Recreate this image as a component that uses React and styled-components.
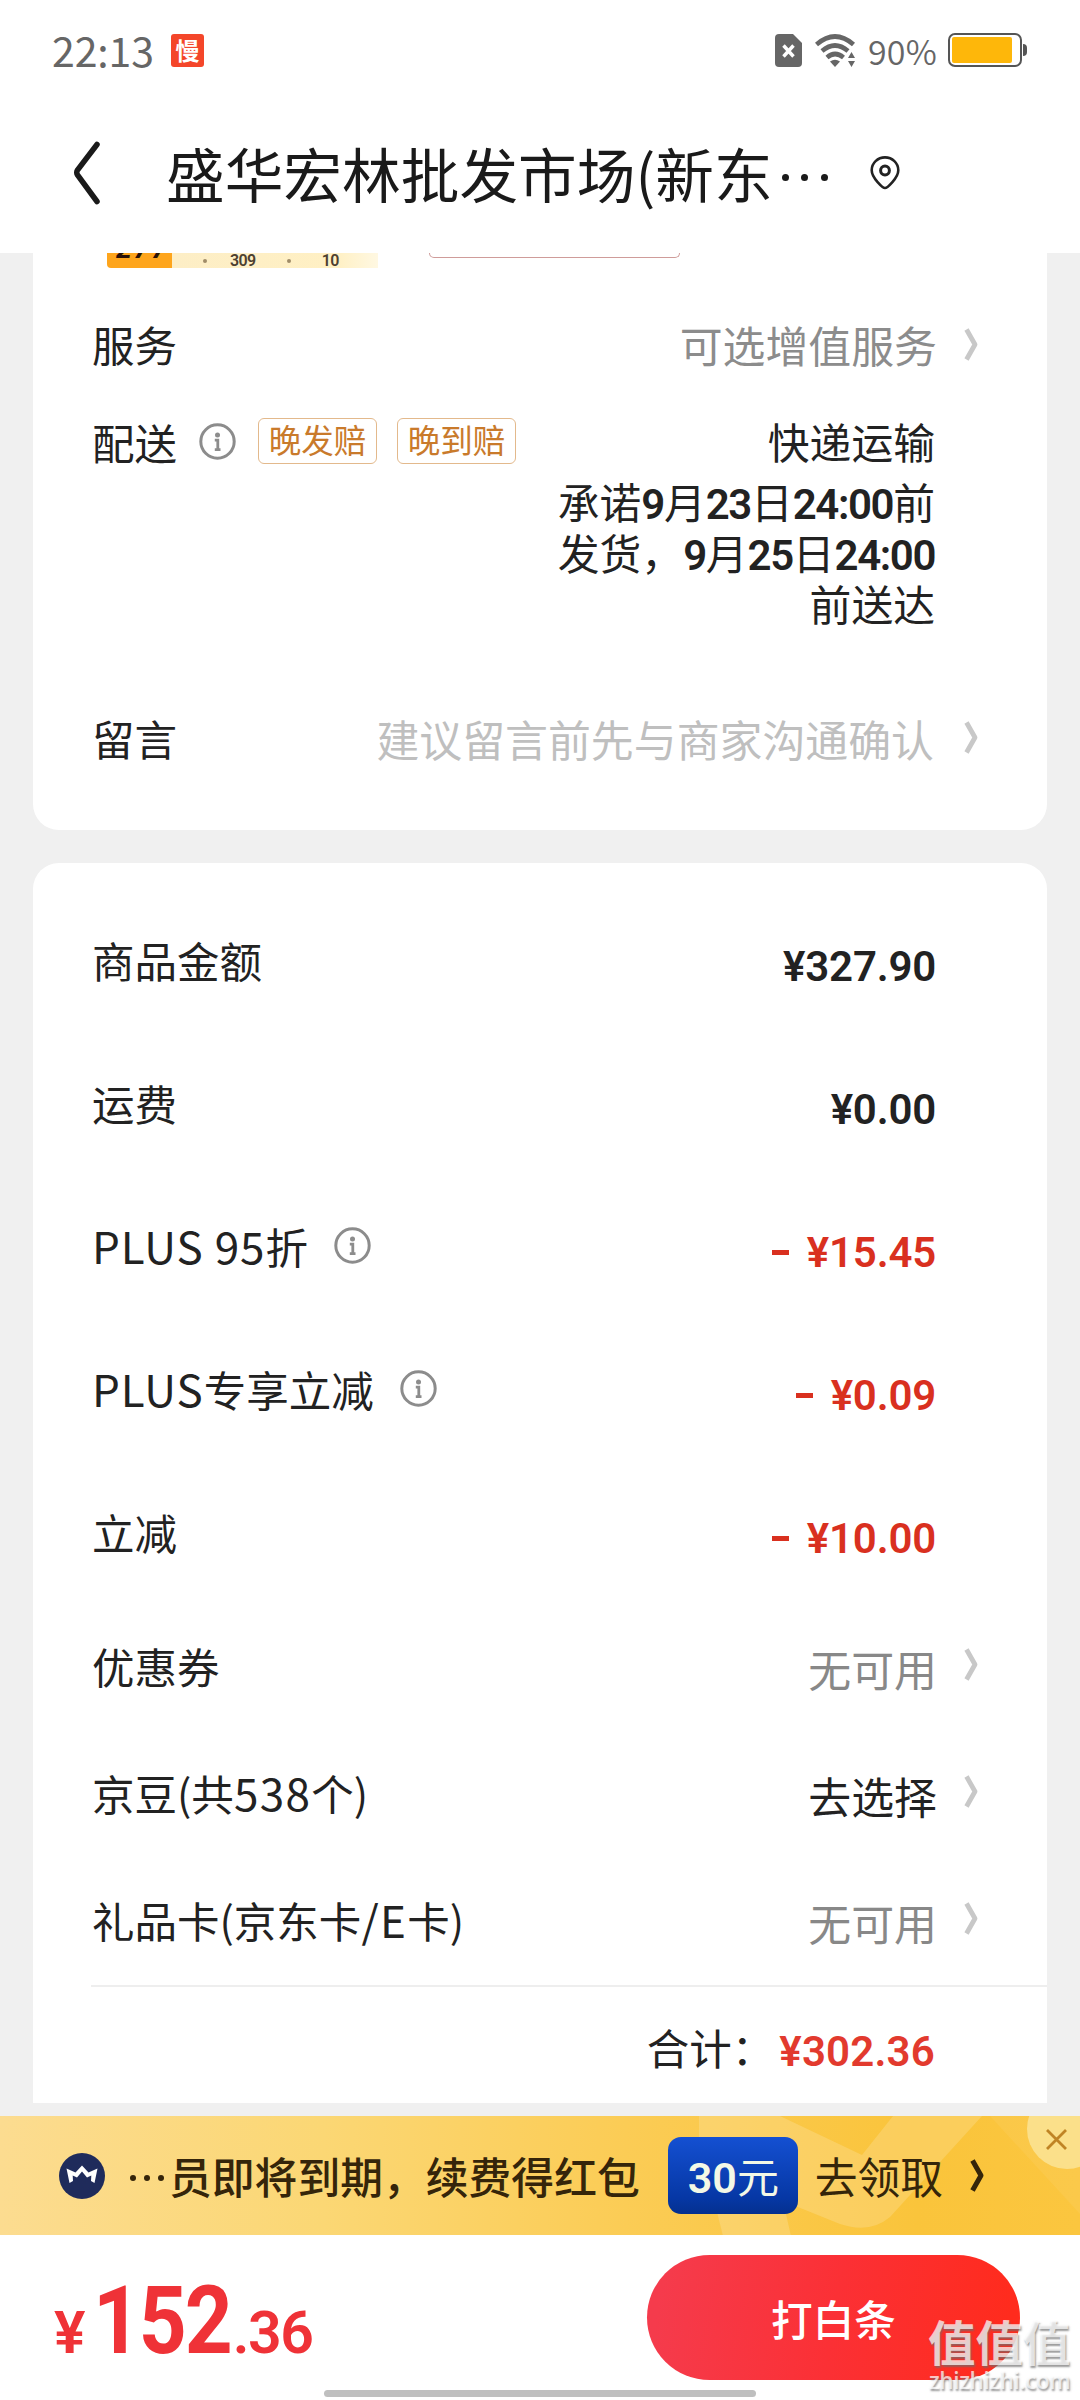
import React from 'react'
import styled, { createGlobalStyle } from 'styled-components'

const GlobalStyle = createGlobalStyle`
*{
  box-sizing: border-box;
  margin: 0;
  padding: 0;
}
body{
  background: #fff;
  font-family: 'Noto Sans CJK SC', sans-serif;
  color: #222;
}
svg{
  display: block;
  flex: none;
}
`

const Screen = styled.div`
width: 1080px;
height: 2400px;
display: flex;
flex-direction: column;
background: #f0f0f0;
overflow: hidden;
position: relative;
`

/* ---------- status bar ---------- */
const StatusBar = styled.div`
height: 100px;
background: #fff;
padding: 0 53px 0 52px;
display: flex;
align-items: center;
justify-content: space-between;
color: #666;
`

const StatusGroup = styled.div`
display: flex;
align-items: center;
`

const Clock = styled.span`
font-size: 41px;
line-height: 50px;
letter-spacing: -0.1px;
margin: -3px 17px 0 0;
`

const AppBadge = styled.span`
width: 33px;
height: 33px;
border-radius: 3px;
background: #f4462a;
color: #fff;
font-size: 24px;
font-weight: 700;
line-height: 31px;
text-align: center;
`

const BatteryText = styled.span`
font-size: 34px;
line-height: 40px;
font-weight: 350;
letter-spacing: 0.2px;
margin: 1px 11px 0 12px;
`

/* ---------- title bar ---------- */
const TitleBar = styled.header`
height: 153px;
background: #fff;
display: flex;
align-items: center;
padding: 0 0 7px 73px;
`

const Title = styled.h1`
font-size: 58.7px;
line-height: 70px;
font-weight: 400;
color: #1a1a1a;
margin: 0 0 0 65px;
white-space: nowrap;
`

const Dots = styled.span`
display: inline-flex;
align-items: center;
gap: ${props => props.gap};
height: ${props => props.size};
vertical-align: ${props => props.lift};
margin-left: ${props => props.left || 0};

i{
  width: ${props => props.size};
  height: ${props => props.size};
  border-radius: 50%;
  background: currentColor;
}
`

/* ---------- cards ---------- */
const Card = styled.section`
width: 1014px;
margin: 0 auto;
background: #fff;
border-radius: ${props => props.radius};
`

const ServiceCard = styled(Card)`
height: 577px;
margin-bottom: 33px;
`

const AmountCard = styled(Card)`
height: 1240px;
padding-top: 25px;
`

const ProductStrip = styled.div`
height: 16px;
padding-left: 74px;
display: flex;
overflow: hidden;
`

const PriceTag = styled.div`
width: 65px;
height: 15px;
background: #fea51c;
border-radius: 0 0 0 4px;
color: #2b1206;
font: italic 700 28px/28px Roboto, sans-serif;
letter-spacing: 2px;
padding-left: 9px;
overflow: hidden;

span{
  display: block;
  margin-top: -18px;
}
`

const PriceScale = styled.div`
width: 206px;
height: 15px;
background: linear-gradient(90deg, #fdeec6, #fff0c4 80%, #fff8e2);
display: flex;
align-items: center;
padding-left: 31px;
color: #4d4030;
font: 600 16px/15px Roboto, sans-serif;
letter-spacing: -0.6px;

i{
  width: 4px;
  height: 4px;
  border-radius: 50%;
  background: #a08c68;
}
b{
  font-weight: 600;
  margin: -1px 31px 0 23px;
}
b:last-child{
  margin: -1px 0 0 31px;
}
`

const SpecBox = styled.div`
width: 251px;
height: 5px;
margin-left: 51px;
border: 1.5px solid #cf9c9a;
border-top: 0;
border-radius: 0 0 5px 5px;
`

const Row = styled.div`
height: ${props => props.h}px;
padding: ${props => props.top || 0}px 69px 0 59px;
display: flex;
align-items: center;
justify-content: space-between;
`

const DeliveryRow = styled(Row)`
height: 221px;
align-items: flex-start;
`

const Label = styled.div`
display: flex;
align-items: center;
gap: ${props => props.gap || 22}px;
font-size: 42.5px;
line-height: 44px;
white-space: nowrap;
`

const Latin = styled.span`
font-size: 44px;
line-height: 0;
letter-spacing: ${props => props.spacing}px;
`

const Tags = styled.div`
display: flex;
gap: 20px;
margin-top: -1px;
`

const Tag = styled.span`
width: 119px;
height: 46px;
border: 1.5px solid #e3b98c;
border-radius: 6px;
color: #c97a2b;
font-size: 32.5px;
line-height: 39px;
text-align: center;
`

const Value = styled.div`
display: flex;
align-items: center;
gap: ${props => props.gap || 27}px;
font-size: 42.9px;
line-height: 44px;
color: ${props => props.color || '#222'};
white-space: nowrap;
`

const AssetRow = styled(Row)`
${Label}{
  margin-top: -3px;
}
${Value}{
  margin-top: 1px;
}
svg{
  margin-top: -7px;
}
`

const Promise = styled.div`
margin-right: 43px;
text-align: right;
font-size: 41.8px;
line-height: 44px;

p{
  height: 50.8px;
  line-height: 50.8px;
}
p:nth-child(2){
  margin-top: 13px;
}
`

const Num = styled.span`
font-family: Roboto, sans-serif;
font-weight: 600;
font-size: 42px;
line-height: 0;
letter-spacing: -1.4px;
`

const Amount = styled.div`
margin: 15px 42px 0 0;
font: 600 42px/44px Roboto, sans-serif;
color: ${props => props.red || '#222'};
letter-spacing: -0.2px;
display: flex;
gap: 18px;
`

const Minus = styled.i`
width: 17px;
height: 5px;
margin-top: 19px;
background: currentColor;
`

const TotalRow = styled(Row)`
height: 118px;
margin-left: 58px;
padding: 4px 112px 0 0;
border-top: 2px solid #eeeeee;
justify-content: flex-end;
gap: 5px;

${Amount}{
  margin: 10px 0 0;
  letter-spacing: 0.2px;
}
`

/* ---------- member banner ---------- */
const Banner = styled.div`
height: 119px;
margin-top: 13px;
flex: none;
position: relative;
overflow: hidden;
display: flex;
align-items: center;
padding-left: 59px;
background: linear-gradient(90deg, #fcdc90 0%, #fbd774 30%, #fbcc55 58%, #fac43b 85%, #fbc63f 100%);
color: #35250a;
`

const BannerArt = styled.svg`
position: absolute;
left: 0;
top: 0;
`

const BannerText = styled.div`
position: relative;
margin: 0 0 1px 24px;
font-size: 42.8px;
line-height: 50px;
font-weight: 500;
white-space: nowrap;

span + span{
  margin-left: 5px;
}
`

const Chip = styled.div`
position: relative;
width: 130px;
height: 77px;
margin-left: 28px;
border-radius: 13px;
background: linear-gradient(180deg, #1450d2, #0637a4 80%, #04308f);
color: #f3f8e6;
font-size: 42px;
line-height: 75px;
padding-left: 20px;
white-space: nowrap;

${Num}{
  font-size: 43px;
  letter-spacing: 0;
}
`

const Claim = styled.div`
position: relative;
display: flex;
align-items: center;
gap: 27px;
margin-left: 17px;
font-size: 42.8px;
line-height: 50px;

span{
  margin-bottom: 1px;
}
`

const CloseButton = styled.button`
position: absolute;
right: -27px;
top: -27px;
width: 80px;
height: 80px;
border: 0;
border-radius: 50%;
background: #fbe08a;
display: flex;
align-items: flex-start;
padding: 40px 0 0 19px;
`

/* ---------- pay bar ---------- */
const PayBar = styled.footer`
flex: 1;
background: #fff;
display: flex;
justify-content: space-between;
align-items: flex-start;
padding: 20px 60px 0 54px;
`

const Price = styled.div`
color: #ef3237;
font: 600 59px/94px Roboto, sans-serif;
margin-top: 19px;
letter-spacing: -1.4px;
white-space: nowrap;
display: flex;
align-items: baseline;

b{
  font-size: 94px;
  font-weight: 700;
  letter-spacing: -2.4px;
  margin: 0 -15px 0 9px;
  transform: scaleX(0.89);
  transform-origin: left;
}
`

const PayButton = styled.button`
width: 373px;
height: 125px;
border: 0;
border-radius: 63px;
background: linear-gradient(100deg, #f53b4c 5%, #fb3035 50%, #ff2b1d 95%);
color: #fff;
font: 500 41.6px/60px 'Noto Sans CJK SC', sans-serif;
`

const HomeIndicator = styled.div`
position: absolute;
left: 324px;
top: 2390px;
width: 432px;
height: 7px;
border-radius: 4px;
background: #bfbfbf;
`

const Watermark = styled.div`
position: absolute;
left: 928px;
top: 2313px;
width: 146px;
color: rgba(255, 255, 255, 0.72);
text-shadow: 1px 2px 2px rgba(110, 110, 110, 0.7);
white-space: nowrap;

strong{
  display: block;
  font-size: 47.5px;
  line-height: 56px;
  font-weight: 700;
}
span{
  display: block;
  font: 600 22.5px/24px 'Open Sans', sans-serif;
  letter-spacing: -0.4px;
  padding-left: 1px;
}
`

const Chevron = ({ color = '#c8c8c8', width = 4.8 }) => (
  <svg width="14" height="33" viewBox="0 0 14 33" fill="none" stroke={color} strokeWidth={width}>
    <path d="M2.5 1.5 L11 16.5 L2.5 31.5" strokeLinejoin="round" />
  </svg>
)

const InfoIcon = () => (
  <svg width="37" height="37" viewBox="0 0 37 37" fill="none" stroke="#8c8c8c" strokeWidth="3">
    <circle cx="18.5" cy="18.5" r="16.7" />
    <circle cx="18.5" cy="11.9" r="2.5" fill="#8c8c8c" stroke="none" />
    <path d="M15.8 17.2 H18.8 V26 M15.8 26.6 H21.5" strokeWidth="2.8" />
  </svg>
)

const SimIcon = () => (
  <svg width="27" height="33" viewBox="0 0 27 33">
    <path d="M4 0 H18 L27 9 V29 Q27 33 23 33 H4 Q0 33 0 29 V4 Q0 0 4 0Z" fill="#666" />
    <path d="M8.5 11.5 L18.5 22.5 M18.5 11.5 L8.5 22.5" stroke="#fff" strokeWidth="3.4" />
  </svg>
)

const WifiIcon = () => (
  <svg width="41" height="33" viewBox="0 0 41 33" fill="none" stroke="#666" strokeWidth="4.6">
    <path d="M1.5 10.5 Q20 -5.5 38.5 10.5" />
    <path d="M7 17 Q20 6 33 17" />
    <path d="M12 23.5 Q20 16.5 28.5 23.5" />
    <path d="M15 27.5 Q20 24 25 27.5 L20 33Z" fill="#666" stroke="none" />
    <path d="M33 24 L36.5 18 L40 24Z M33 27 L36.5 33 L40 27Z" fill="#666" stroke="none" />
  </svg>
)

const BatteryIcon = () => (
  <svg width="79" height="34" viewBox="0 0 79 34">
    <rect x="1" y="1" width="72" height="32" rx="6" fill="#fff" stroke="#555" strokeWidth="2" />
    <rect x="4" y="4" width="60" height="26" rx="2" fill="#feb70a" />
    <path d="M75 11 Q79 11 79 15 V19 Q79 23 75 23Z" fill="#555" />
  </svg>
)

const BackIcon = () => (
  <svg width="28" height="64" viewBox="0 0 28 64" fill="none" stroke="#1a1a1a" strokeWidth="5.5">
    <path d="M24 3.5 L4.5 29 Q3 31.5 4.5 34 L24 60.5" strokeLinecap="round" />
  </svg>
)

const PinIcon = () => (
  <svg width="30" height="34" viewBox="0 0 30 34" fill="none" stroke="#222" strokeWidth="2.6">
    <path d="M15 32 C13 32 1.7 22 1.7 14.2 A13.3 12.8 0 0 1 28.3 14.2 C28.3 22 17 32 15 32Z" />
    <circle cx="15" cy="14.5" r="4.4" strokeWidth="3" />
  </svg>
)

const CrownIcon = () => (
  <svg width="46" height="46" viewBox="0 0 46 46">
    <circle cx="23" cy="23" r="23" fill="#1f2b5b" />
    <path d="M7.5 15.5 L16.5 19.5 L23 12.5 L29.5 19.5 L38.5 15.5 L35.5 30 L32 28 L32.3 22.5 L28 24.5 L23 18.5 L18 24.5 L13.7 22.5 L14 28 L10.5 30Z" fill="#fff" />
  </svg>
)

const Amt = ({ children, minus }) => (
  <Amount red={minus ? '#d9301f' : undefined}>
    {minus && <Minus />}
    <span>{children}</span>
  </Amount>
)

const amounts = [
  { label: '商品金额', value: '¥327.90' },
  { label: '运费', value: '¥0.00' },
  { latin: 'PLUS 95', label: '折', value: '¥15.45', minus: true, info: true },
  { latin: 'PLUS', label: '专享立减', value: '¥0.09', minus: true, info: true },
  { label: '立减', value: '¥10.00', minus: true },
]

const assets = [
  { label: '优惠券', value: '无可用', color: '#888' },
  { label: <>京豆(共<Latin spacing={1.4}>538</Latin>个)</>, value: '去选择' },
  { label: <>礼品卡(京东卡<Latin spacing={1.4}>/E</Latin>卡)</>, value: '无可用', color: '#888' },
]

const App = () => {
  return (
    <Screen>
      <GlobalStyle />
      <StatusBar>
        <StatusGroup>
          <Clock>22:13</Clock>
          <AppBadge>慢</AppBadge>
        </StatusGroup>
        <StatusGroup>
          <SimIcon />
          <svg width="13" height="1" />
          <WifiIcon />
          <BatteryText>90%</BatteryText>
          <BatteryIcon />
        </StatusGroup>
      </StatusBar>

      <TitleBar>
        <BackIcon />
        <Title>
          盛华宏林批发市场(新东
          <Dots size="7px" gap="12.5px" lift="17px" left="9px"><i /><i /><i /></Dots>
        </Title>
        <svg width="42" height="1" />
        <PinIcon />
      </TitleBar>

      <ServiceCard radius="0 0 26px 26px">
        <ProductStrip>
          <PriceTag><span>277</span></PriceTag>
          <PriceScale><i /><b>309</b><i /><b>10</b></PriceScale>
          <SpecBox />
        </ProductStrip>
        <Row h={150}>
          <Label>服务</Label>
          <Value color="#8c8c8c">可选增值服务<Chevron /></Value>
        </Row>
        <DeliveryRow>
          <Label>
            配送
            <InfoIcon />
            <Tags>
              <Tag>晚发赔</Tag>
              <Tag>晚到赔</Tag>
            </Tags>
          </Label>
          <Promise>
            <div>快递运输</div>
            <p>承诺<Num>9</Num>月<Num>23</Num>日<Num>24:00</Num>前</p>
            <p>发货，<Num>9</Num>月<Num>25</Num>日<Num>24:00</Num></p>
            <p>前送达</p>
          </Promise>
        </DeliveryRow>
        <Row h={190} top={5}>
          <Label>留言</Label>
          <Value color="#bfbfbf" gap={30}>建议留言前先与商家沟通确认<Chevron /></Value>
        </Row>
      </ServiceCard>

      <AmountCard radius="26px 26px 0 0">
        {amounts.map(item => (
          <Row h={143} key={item.value}>
            <Label gap={26}>
              <span>{item.latin && <Latin spacing={1}>{item.latin}</Latin>}{item.label}</span>
              {item.info && <InfoIcon />}
            </Label>
            <Amt minus={item.minus}>{item.value}</Amt>
          </Row>
        ))}
        {assets.map((item, i) => (
          <AssetRow h={i === 0 ? 128 : 127} key={i}>
            <Label><span>{item.label}</span></Label>
            <Value color={item.color}><span>{item.value}</span><Chevron /></Value>
          </AssetRow>
        ))}
        <TotalRow>
          <Label>合计：</Label>
          <Amount red="#e23a2e">¥302.36</Amount>
        </TotalRow>
      </AmountCard>

      <Banner>
        <BannerArt width="1080" height="120" viewBox="0 0 1080 120" fill="#fff">
          <path d="M699 0 H780 L862 39 L893 0 H982 L890 101 Q870 118 840 108 L783 85 L791 120 H723 L699 24Z" opacity="0.17" />
          <path d="M990 0 L1080 98 V0Z" opacity="0.06" />
        </BannerArt>
        <CrownIcon />
        <BannerText>
          <Dots size="6px" gap="8px" lift="13px" left="1px"><i /><i /><i /></Dots>
          <span>员即将到期，续费得红包</span>
        </BannerText>
        <Chip><Num>30</Num>元</Chip>
        <Claim>
          <span>去领取</span>
          <Chevron color="#35250a" width={5} />
        </Claim>
        <CloseButton>
          <svg width="21" height="21" viewBox="0 0 21 21" stroke="#c08424" strokeWidth="2.8">
            <path d="M1 1 L20 20 M20 1 L1 20" />
          </svg>
        </CloseButton>
      </Banner>

      <PayBar>
        <Price>¥<b>152</b>.36</Price>
        <PayButton>打白条</PayButton>
      </PayBar>
      <HomeIndicator />
      <Watermark>
        <strong>值值值</strong>
        <span>zhizhizhi.com</span>
      </Watermark>
    </Screen>
  )
}

export default App
